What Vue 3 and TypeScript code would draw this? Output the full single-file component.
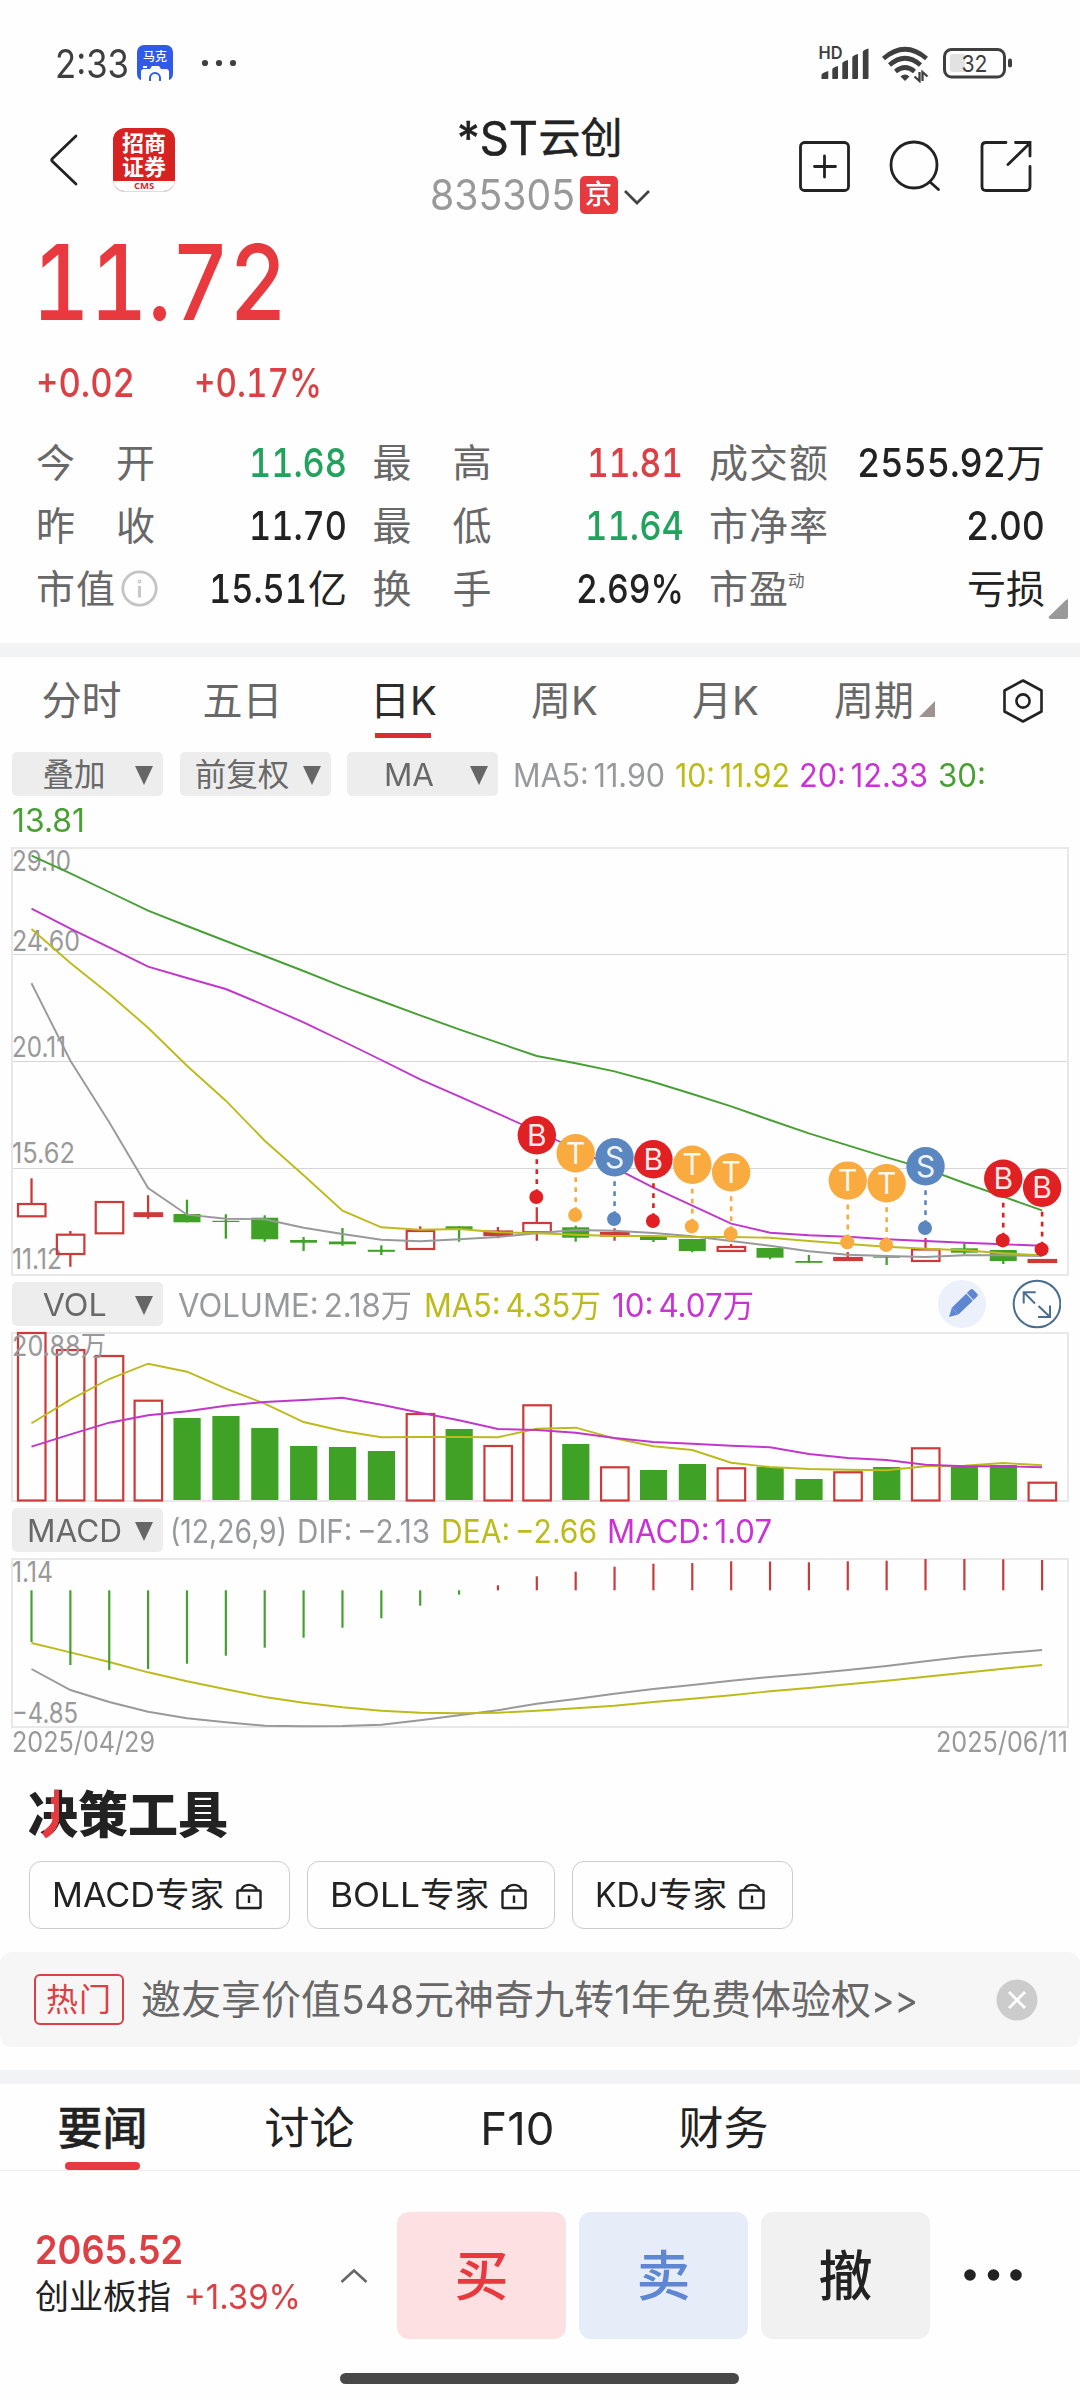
<script setup lang="ts">
interface Stat { label: string; num?: string; unit?: string; w?: number; mr?: number; tone: string; info?: boolean; sup?: string }
interface Legend { text: string; w: number; gap: number; tone: string }
interface Candle { up: boolean; hi: number; top: number; bot: number; lo: number }
interface Marker { i: number; kind: 'B' | 'S' | 'T'; y: number }

/* Condenses a run of figures so that it takes exactly the given width. */
const vFit = {
  mounted(el: HTMLElement, binding: { value: number }) {
    const natural = el.getBoundingClientRect().width
    el.style.width = binding.value + 'px'
    el.style.transform = 'scaleX(' + binding.value / natural + ')'
  },
}

const columns: Stat[][] = [
  [
    { label: '今开', num: '11.68', w: 98, tone: 'down' },
    { label: '昨收', num: '11.70', w: 98, tone: 'ink' },
    { label: '市值', num: '15.51', unit: '亿', w: 98, mr: 1, tone: 'ink', info: true },
  ],
  [
    { label: '最高', num: '11.81', w: 96, mr: 1, tone: 'up' },
    { label: '最低', num: '11.64', w: 99, tone: 'down' },
    { label: '换手', num: '2.69%', w: 108, tone: 'ink' },
  ],
  [
    { label: '成交额', num: '2555.92', unit: '万', w: 149, tone: 'ink' },
    { label: '市净率', num: '2.00', w: 79, tone: 'ink' },
    { label: '市盈', unit: '亏损', tone: 'ink', sup: '动' },
  ],
]

const periods = ['分时', '五日', '日K', '周K', '月K', '周期']

const maLegend: Legend[] = [
  { text: 'MA5: 11.90', w: 152, gap: 15, tone: 'gray' },
  { text: '10: 11.92', w: 115, gap: 10, tone: 'olive' },
  { text: '20: 12.33', w: 129, gap: 9, tone: 'pink' },
  { text: '30:', w: 48, gap: 10, tone: 'green' },
]
const volLegend: Legend[] = [
  { text: 'VOLUME: 2.18万', w: 234, gap: 15, tone: 'gray' },
  { text: 'MA5: 4.35万', w: 177, gap: 12, tone: 'olive' },
  { text: '10: 4.07万', w: 142, gap: 11, tone: 'pink' },
]
const macdLegend: Legend[] = [
  { text: '(12,26,9)', w: 117, gap: 7, tone: 'gray' },
  { text: 'DIF: −2.13', w: 133, gap: 10, tone: 'gray' },
  { text: 'DEA: −2.66', w: 156, gap: 11, tone: 'olive' },
  { text: 'MACD: 1.07', w: 165, gap: 10, tone: 'pink' },
]

const STEP = 38.87
const cx = (i: number) => 31.5 + i * STEP
const pts = (ys: number[]) => ys.map((y, i) => cx(i).toFixed(1) + ',' + y).join(' ')

const raw: [number, number, number, number, number][] = [
  [1, 1178.3, 1204, 1216.3, 1216.3], [1, 1231, 1234.7, 1254, 1266.7], [1, 1201.7, 1202, 1233.3, 1233.3],
  [1, 1195.3, 1213.3, 1216, 1218.7], [0, 1199.7, 1214, 1222.3, 1222.3], [0, 1214.3, 1220.8, 1222, 1238.7],
  [0, 1215.3, 1217.7, 1239.3, 1241.7], [0, 1237, 1240, 1242.7, 1251], [0, 1228, 1241.5, 1244.3, 1245.7],
  [0, 1245.3, 1249.8, 1251.8, 1255], [1, 1226.3, 1231, 1249, 1249], [0, 1226.3, 1226.3, 1229.3, 1241.7],
  [1, 1227, 1231.5, 1235, 1238.3], [1, 1207.3, 1223, 1232.3, 1240.7], [0, 1225.7, 1227.3, 1237.7, 1241.7],
  [1, 1228.3, 1233, 1235.5, 1240.7], [0, 1236, 1236, 1240, 1242], [0, 1239, 1239, 1251, 1252.3],
  [1, 1244, 1247, 1251, 1252], [0, 1248, 1248, 1257.7, 1259.3], [0, 1255, 1261, 1262.8, 1262.8],
  [1, 1252, 1258, 1260, 1260], [0, 1255.3, 1256.5, 1257.7, 1265], [1, 1238, 1249.5, 1261, 1262],
  [0, 1243.3, 1248.3, 1252.7, 1254], [0, 1250, 1250, 1261, 1264], [1, 1259, 1260, 1262, 1262],
]
const candles: Candle[] = raw.map(([u, hi, top, bot, lo]) => ({ up: u === 1, hi, top, bot, lo }))
/* Bodies this thin are drawn filled. */
const solid = (k: Candle) => k.bot - k.top < 3.6

const ma30 = [855.7, 873.3, 892, 910.7, 926, 941, 956, 971, 986.7, 1001, 1015.3, 1029.3, 1042.7, 1056, 1063.3, 1071.3, 1082, 1094, 1106.3, 1120, 1133.3, 1145.3, 1157.3, 1168.7, 1183, 1196.7, 1210.3]
const ma20 = [908.7, 928.7, 947.3, 966.7, 978, 989, 1005.3, 1022.3, 1041, 1060, 1079.3, 1096.3, 1113.7, 1131, 1149, 1167.7, 1187.7, 1205.7, 1223.7, 1232.7, 1235.3, 1236.7, 1239.3, 1241, 1242.7, 1244.3, 1245.7]
const ma10 = [929, 963, 994, 1027.7, 1065.7, 1100.7, 1140.7, 1175.3, 1210.7, 1227.3, 1229.7, 1229, 1232.3, 1233.3, 1234.7, 1236, 1236, 1237, 1237, 1237.7, 1241, 1244, 1246.7, 1248.7, 1250.3, 1253.3, 1255.3]
const ma5 = [983.3, 1060.7, 1122.3, 1188, 1214.7, 1218.7, 1219.3, 1227.7, 1234, 1239.7, 1241.3, 1239.3, 1237, 1233.3, 1230, 1230.7, 1233, 1236.3, 1241, 1245.7, 1251.3, 1254.7, 1256, 1257, 1255.3, 1255.3, 1256]

const markers: Marker[] = [
  { i: 13, kind: 'B', y: 1135.3 }, { i: 14, kind: 'T', y: 1153.3 }, { i: 15, kind: 'S', y: 1157.3 },
  { i: 16, kind: 'B', y: 1159.3 }, { i: 17, kind: 'T', y: 1164.7 }, { i: 18, kind: 'T', y: 1172.3 },
  { i: 21, kind: 'T', y: 1180.6 }, { i: 22, kind: 'T', y: 1183.3 }, { i: 23, kind: 'S', y: 1166.3 },
  { i: 25, kind: 'B', y: 1178.7 }, { i: 26, kind: 'B', y: 1187.7 },
]
const markerColor = { B: '#e02023', S: '#5b87c1', T: '#f9ab3f' }

const priceLabels = [
  { t: '29.10', w: 59, y: 871 }, { t: '24.60', w: 68, y: 951 }, { t: '20.11', w: 54, y: 1057 },
  { t: '15.62', w: 63, y: 1163 }, { t: '11.12', w: 50, y: 1269 },
]

const volTops = [1333, 1350, 1356, 1400.7, 1418, 1416, 1428, 1446, 1447, 1451, 1414, 1429, 1446, 1405.3, 1444, 1467.3, 1470, 1464, 1468.3, 1467, 1479, 1472.3, 1467, 1448.3, 1466.7, 1465, 1482.7]
const vol5 = [1423.3, 1399.7, 1379, 1363.7, 1371.7, 1388.7, 1403.7, 1422, 1431, 1437.3, 1437, 1437, 1437.3, 1428.7, 1427.7, 1438.3, 1446.3, 1450, 1462.7, 1467, 1469, 1469.7, 1470.3, 1466.3, 1465.7, 1463, 1465.3]
const vol10 = [1446.7, 1434.3, 1422.7, 1415.3, 1411.3, 1405.7, 1402, 1400, 1397.7, 1404.7, 1412.7, 1420.3, 1429, 1430, 1432.7, 1438, 1442, 1443.7, 1445.7, 1447.3, 1454, 1458, 1460, 1464.7, 1466.3, 1466.3, 1467.3]

const ZERO = 1590.3
const macd = [1642, 1665, 1670, 1669, 1663.7, 1655.7, 1647.7, 1637.7, 1627.7, 1618.3, 1605.7, 1594.7, 1585.3, 1576.3, 1571.7, 1566.7, 1563.7, 1563, 1561.3, 1561.5, 1562.3, 1561.3, 1560.7, 1559, 1559, 1559.3, 1560]
const dif = [1669, 1690, 1702, 1711.7, 1718.3, 1722.3, 1725.7, 1726.3, 1726, 1724.7, 1720.3, 1715.3, 1710.3, 1703.7, 1699, 1693.7, 1689, 1685, 1680.7, 1677, 1673.7, 1670, 1666, 1661.3, 1656.7, 1653.3, 1650]
const dea = [1643, 1652.3, 1662, 1672.3, 1681.3, 1689.3, 1697, 1702.7, 1707.3, 1710.7, 1712.7, 1713.3, 1712.7, 1710.7, 1708.3, 1705.7, 1702, 1698.7, 1695.3, 1691.3, 1688, 1684.3, 1680.7, 1676.7, 1672.7, 1668.7, 1665]

const tools = [{ name: 'MACD', w: 103 }, { name: 'BOLL', w: 90 }, { name: 'KDJ', w: 63 }]
const newsTabs = ['要闻', '讨论', 'F10', '财务']
</script>

<template>
  <div class="screen">
    <div class="status">
      <span class="clock"><span v-fit="74" class="fit">2:33</span></span>
      <svg class="camera" width="36" height="36" viewBox="0 0 36 36">
        <rect width="36" height="36" rx="7" fill="#2f5be8" />
        <path d="M4 36V27q0-3 3-3h6l2-3h7l2 3h5q3 0 3 3v9z" fill="#fff" />
        <path d="M6 22h4" stroke="#fff" stroke-width="2" />
        <path d="M13 36v-3a5 5 0 0 1 10 0v3" fill="none" stroke="#2f5be8" stroke-width="2" />
        <text x="18" y="16" text-anchor="middle" class="camera-text">马克</text>
      </svg>
      <svg class="more" width="40" height="8" viewBox="0 0 40 8" fill="#3f3f3f">
        <circle cx="6" cy="4" r="3.1" /><circle cx="20" cy="4" r="3.1" /><circle cx="34" cy="4" r="3.1" />
      </svg>
      <svg class="signals" width="196" height="40" viewBox="818 43 196 40">
        <text x="818.5" y="59.3" class="hd" textLength="24" lengthAdjust="spacingAndGlyphs">HD</text>
        <g fill="#3f3f3f">
          <path d="M821.5 79v-4q0-2 6.800-4v7q0 1-1 1z" />
          <path d="M832.300 79v-9.500q0-2 5.700-3.500v12q0 1-1 1z" />
          <path d="M842.300 79v-15.500q0-2 5.700-3.500v18q0 1-1 1z" />
          <path d="M852.300 79v-21.500q0-2 5.700-3.500v24q0 1-1 1z" />
          <path d="M862.800 79v-27q0-2 5.700-3.500v29.500q0 1-1 1z" />
          <path d="M905 81l-4.500-4.500q4.500-4 9 0z" />
        </g>
        <g fill="none" stroke="#3f3f3f" stroke-width="4.600">
          <path d="M883.500 58.500q21.500-18.500 43 0" />
          <path d="M889.500 65q15.500-13.500 31 0" />
          <path d="M895.500 71.500q9.500-8 19 0" />
        </g>
        <path d="M919.500 72v9l-5-4.500M922.500 81v-9l5 4.500" fill="none" stroke="#3f3f3f" stroke-width="2.300" />
        <rect x="944.500" y="49.500" width="60" height="27.500" rx="7" fill="none" stroke="#3f3f3f" stroke-width="3" />
        <path d="M953 54h12v18h-12q-3 0-3-3V57q0-3 3-3z" fill="#e2e2e2" />
        <rect x="1008" y="58.500" width="4" height="9" rx="2" fill="#3f3f3f" />
        <text x="961.500" y="71.700" class="batt" textLength="26" lengthAdjust="spacingAndGlyphs">32</text>
      </svg>
    </div>

    <header class="header">
      <div class="head-left">
        <svg width="30" height="54" viewBox="0 0 30 54" fill="none" stroke="#222" stroke-width="2.800" stroke-linejoin="round" stroke-linecap="round">
          <path d="M27 3L3.500 25.500q-1.500 1.500 0 3L27 51" />
        </svg>
        <div class="broker">
          <div class="broker-name">招商<br />证券</div>
          <div class="broker-sub">CMS</div>
        </div>
      </div>
      <div class="head-mid">
        <div class="title"><span v-fit="81" class="fit">*ST</span><span class="title-cn">云创</span></div>
        <div class="code">
          <span v-fit="145" class="fit">835305</span>
          <span class="market">京</span>
          <svg width="28" height="18" viewBox="0 0 28 18" fill="none" stroke="#444" stroke-width="2.800"><path d="M2 3l12 12L26 3" /></svg>
        </div>
      </div>
      <div class="head-right">
        <svg width="52" height="54" viewBox="797 139 52 54" fill="none" stroke="#222" stroke-width="2.800" stroke-linecap="round">
          <rect x="799.500" y="142.500" width="48" height="48" rx="4" /><path d="M823.500 156v21M813.500 166.500h21" />
        </svg>
        <svg width="52" height="54" viewBox="888 139 52 54" fill="none" stroke="#222" stroke-width="2.800" stroke-linecap="round">
          <circle cx="913" cy="165" r="23" /><path d="M929 182l8.500 7.500" />
        </svg>
        <svg width="52" height="54" viewBox="980 139 52 54" fill="none" stroke="#222" stroke-width="2.800" stroke-linecap="round">
          <path d="M1006 142.500h-20q-4 0-4 4v40q0 4 4 4h40q4 0 4-4V166.500" /><path d="M1015.500 142.500h14.500v13.500M1029 144l-21 20.500" />
        </svg>
      </div>
    </header>

    <section class="quote">
      <div class="price"><span v-fit="255" class="fit">11.72</span></div>
      <div class="change">
        <span v-fit="99" class="fit">+0.02</span>
        <span v-fit="128" class="fit second">+0.17%</span>
      </div>
      <div class="stats">
        <div v-for="(col, c) in columns" :key="c" class="stat-col">
          <div v-for="s in col" :key="s.label" class="stat">
            <div class="stat-label" :class="{ packed: s.info || s.sup }">
              <span v-for="ch in s.label" :key="ch">{{ ch }}</span>
              <svg v-if="s.info" class="info" width="37" height="37" viewBox="0 0 37 37" fill="none" stroke="#c4c4c4" stroke-width="2.800">
                <circle cx="18.500" cy="18.500" r="16.700" /><path d="M18.500 16v11.500" /><circle cx="18.500" cy="11.500" r=".6" />
              </svg>
              <span v-if="s.sup" class="sup">{{ s.sup }}</span>
            </div>
            <div class="stat-value" :class="s.tone">
              <span v-if="s.num" v-fit="s.w" class="fit" :style="{ marginRight: (s.mr || 0) + 'px' }">{{ s.num }}</span><span v-if="s.unit" class="unit">{{ s.unit }}</span>
            </div>
          </div>
        </div>
        <svg class="corner" width="20" height="20" viewBox="0 0 20 20"><path d="M20 0v18q0 2-2 2H2q-2-1-1-2.500L18 1z" fill="#999" /></svg>
      </div>
    </section>

    <div class="band"></div>

    <nav class="periods">
      <div v-for="(p, i) in periods" :key="p" class="period" :class="{ active: i === 2 }">
        <span>{{ p }}</span>
        <svg v-if="i === 5" class="tri" width="16" height="16" viewBox="0 0 16 16"><path d="M16 0v16H0z" fill="#9f9391" /></svg>
      </div>
      <svg class="gear" width="42" height="46" viewBox="0 0 42 46" fill="none" stroke="#222" stroke-width="2.600" stroke-linejoin="round">
        <path d="M21 2.500L39.500 12.500V33.500L21 43.500L2.500 33.500V12.500z" /><circle cx="21" cy="23" r="6.600" />
      </svg>
    </nav>

    <div class="bar">
      <div class="drop"><span class="drop-text">叠加</span><i></i></div>
      <div class="drop"><span class="drop-text">前复权</span><i></i></div>
      <div class="drop"><span class="drop-text"><span v-fit="50" class="fit">MA</span></span><i></i></div>
      <span v-for="l in maLegend" :key="l.text" v-fit="l.w" class="fit legend" :class="l.tone" :style="{ marginLeft: l.gap + 'px' }">{{ l.text }}</span>
    </div>
    <div class="bar-second green"><span v-fit="73" class="fit">13.81</span></div>

    <svg class="chart" width="1080" height="438" viewBox="0 844 1080 438">
      <g stroke="#d6d6d6"><path d="M12 954.500H1068M12 1061.500H1068M12 1168.500H1068" /></g>
      <rect x="12" y="848" width="1056" height="427" fill="none" stroke="#e8e8e8" stroke-width="2" />
      <text v-for="l in priceLabels" :key="l.t" x="12" :y="l.y" :textLength="l.w" lengthAdjust="spacingAndGlyphs" class="axis">{{ l.t }}</text>
      <g v-for="(k, i) in candles" :key="i">
        <template v-if="k.up">
          <path :d="`M${cx(i)} ${k.hi}V${k.top}M${cx(i)} ${k.bot}V${k.lo}`" stroke="#cc3a3a" stroke-width="2.300" />
          <rect :x="cx(i) - 13.5" :y="k.top" width="27.500" :height="k.bot - k.top" :fill="solid(k) ? '#cc3a3a' : 'none'" stroke="#cc3a3a" stroke-width="2.200" />
        </template>
        <template v-else>
          <path :d="`M${cx(i)} ${k.hi}V${k.lo}`" stroke="#3fa226" stroke-width="2.300" />
          <rect :x="cx(i) - 13.5" :y="k.top" width="27" :height="k.bot - k.top" fill="#3fa226" />
        </template>
      </g>
      <g fill="none" stroke-width="1.900">
        <polyline :points="pts(ma5)" stroke="#98999b" />
        <polyline :points="pts(ma10)" stroke="#bdbb1c" />
        <polyline :points="pts(ma20)" stroke="#c137cb" />
        <polyline :points="pts(ma30)" stroke="#489f35" />
      </g>
      <g v-for="m in markers" :key="m.i">
        <path :d="`M${cx(m.i)} ${m.y + 24}V${m.y + 56}`" :stroke="markerColor[m.kind]" stroke-width="2.600" stroke-dasharray="4.800 5.200" />
        <circle :cx="cx(m.i)" :cy="m.y" r="19.200" :fill="markerColor[m.kind]" />
        <circle :cx="cx(m.i) - 0.5" :cy="m.y + 61.7" r="7" :fill="markerColor[m.kind]" />
        <text :x="cx(m.i)" :y="m.y + 10.5" text-anchor="middle" class="mark">{{ m.kind }}</text>
      </g>
    </svg>

    <div class="bar">
      <div class="drop"><span class="drop-text"><span v-fit="64" class="fit">VOL</span></span><i></i></div>
      <span v-for="l in volLegend" :key="l.text" v-fit="l.w" class="fit legend" :class="l.tone" :style="{ marginLeft: l.gap + 'px' }">{{ l.text }}</span>
      <svg class="bar-icons" width="124" height="50" viewBox="937 1279 124 50">
        <circle cx="962" cy="1304" r="24" fill="#ebf0fa" />
        <g transform="translate(949 1317) rotate(-44)" fill="#5f86d3">
          <path d="M0 0l8.500-4.600v9.200z" /><path d="M8.500 -4.800h20v9.600h-20z" /><path d="M29.500 -4.800h5q2 0 2 2v5.600q0 2-2 2h-5z" />
        </g>
        <g fill="none" stroke="#4a6e90" stroke-width="2">
          <circle cx="1037" cy="1304" r="23.300" />
          <path d="M1035 1303.500l-11-11M1023.700 1303.500v-11.200h12M1038.500 1306l11 10.500M1050 1305.500v11.500h-12" />
        </g>
      </svg>
    </div>

    <svg class="chart" width="1080" height="182" viewBox="0 1326 1080 182">
      <rect x="12" y="1333" width="1056" height="168" fill="none" stroke="#e8e8e8" stroke-width="2" />
      <template v-for="(y, i) in volTops" :key="i">
        <rect v-if="candles[i].up" :x="cx(i) - 13.5" :y="y" width="27.500" :height="1500.5 - y" fill="none" stroke="#cc3a3a" stroke-width="2.200" />
        <rect v-else :x="cx(i) - 13.5" :y="y" width="27.200" :height="1500 - y" fill="#3fa226" />
      </template>
      <text x="12" y="1356" textLength="94" lengthAdjust="spacingAndGlyphs" class="axis">20.88万</text>
      <g fill="none" stroke-width="1.900">
        <polyline :points="pts(vol5)" stroke="#bdbb1c" />
        <polyline :points="pts(vol10)" stroke="#c137cb" />
      </g>
    </svg>

    <div class="bar">
      <div class="drop"><span class="drop-text"><span v-fit="95" class="fit">MACD</span></span><i></i></div>
      <span v-for="l in macdLegend" :key="l.text" v-fit="l.w" class="fit legend" :class="l.tone" :style="{ marginLeft: l.gap + 'px' }">{{ l.text }}</span>
    </div>

    <svg class="chart" width="1080" height="178" viewBox="0 1552 1080 178">
      <rect x="12" y="1559" width="1056" height="168" fill="none" stroke="#e8e8e8" stroke-width="2" />
      <text x="12" y="1582" textLength="41" lengthAdjust="spacingAndGlyphs" class="axis">1.14</text>
      <text x="12" y="1723.400" textLength="66" lengthAdjust="spacingAndGlyphs" class="axis">−4.85</text>
      <g fill="none" stroke-width="1.900">
        <polyline :points="pts(dif)" stroke="#98999b" />
        <polyline :points="pts(dea)" stroke="#bdbb1c" />
      </g>
      <path v-for="(y, i) in macd" :key="i" :d="`M${cx(i)} ${ZERO}V${y}`" :stroke="y > ZERO ? '#45a030' : '#c43c3c'" stroke-width="2.200" />
    </svg>
    <div class="dates"><span v-fit="143" class="fit">2025/04/29</span><span v-fit="132" class="fit">2025/06/11</span></div>

    <section class="tools">
      <h2><span class="accent">决</span>策工具</h2>
      <div class="chips">
        <div v-for="t in tools" :key="t.name" class="chip">
          <span v-fit="t.w" class="fit">{{ t.name }}</span><span>专家</span>
          <svg width="26" height="30" viewBox="0 0 26 30" fill="none" stroke="#222" stroke-width="2.400">
            <rect x="1.500" y="10.500" width="23" height="17.500" rx="1.500" /><path d="M5 10.500a8.500 8.500 0 0 1 16 0M13 15.500v7.500" />
          </svg>
        </div>
      </div>
    </section>

    <div class="promo">
      <span class="hot">热门</span>
      <span class="promo-text">邀友享价值<span v-fit="73" class="fit">548</span>元神奇九转<span v-fit="17" class="fit">1</span>年免费体验权<span v-fit="47" class="fit">&gt;&gt;</span></span>
      <svg class="close" width="42" height="42" viewBox="0 0 42 42"><circle cx="21" cy="21" r="20.500" fill="#ccc" /><path d="M13 13l16 16M29 13L13 29" stroke="#fff" stroke-width="2.800" /></svg>
    </div>

    <div class="band low"></div>

    <nav class="news">
      <div v-for="(n, i) in newsTabs" :key="n" class="news-tab" :class="{ active: i === 0 }">
        <span v-if="n === 'F10'" v-fit="74" class="fit">F10</span><span v-else>{{ n }}</span>
      </div>
    </nav>

    <footer class="trade">
      <div class="index">
        <div class="index-num"><span v-fit="148" class="fit">2065.52</span></div>
        <div class="index-row"><span>创业板指</span><span v-fit="117" class="fit up">+1.39%</span></div>
      </div>
      <svg class="expand" width="28" height="16" viewBox="0 0 28 16" fill="none" stroke="#666" stroke-width="2.600"><path d="M1.500 14L14 2.500L26.500 14" /></svg>
      <div class="btn buy">买</div>
      <div class="btn sell">卖</div>
      <div class="btn cancel">撤</div>
      <svg class="dots" width="60" height="14" viewBox="0 0 60 14" fill="#222"><circle cx="7" cy="7" r="5.800" /><circle cx="30.500" cy="7" r="5.800" /><circle cx="53" cy="7" r="5.800" /></svg>
    </footer>
    <div class="home"></div>
  </div>
</template>

<style>
body { background: #fefefe; }
</style>

<style scoped>
.screen {
  width: 1080px;
  height: 2400px;
  overflow: hidden;
  background: #fefefe;
  color: #222;
  font-family: Inter, "Noto Sans CJK SC", sans-serif;
  display: flex;
  flex-direction: column;
}
.screen > * { flex: none; }
svg { display: block; flex: none; }
.fit { display: inline-block; white-space: nowrap; transform-origin: left center; flex: none; }

.status { height: 100px; box-sizing: border-box; padding: 26px 66px 0 55px; display: flex; align-items: center; color: #3f3f3f; }
.clock { font-size: 39px; line-height: 40px; padding-top: 1px; }
.camera { margin-left: 8px; }
.camera-text { font-size: 12px; fill: #fff; font-weight: 500; }
.more { margin-left: 26px; }
.signals { margin-left: auto; }
.hd { font-size: 17px; font-weight: 600; fill: #3f3f3f; }
.batt { font-size: 23.5px; fill: #3f3f3f; }

.header { height: 116px; display: grid; grid-template-columns: 1fr auto 1fr; }
.head-left { display: flex; padding: 28px 0 0 49px; }
.head-left > svg { margin-top: 5px; }
.broker { width: 62px; height: 64px; box-sizing: border-box; margin-left: 34px; border-radius: 12px; overflow: hidden; background: #d82222; border-bottom: 1px solid #ddd; }
.broker-name { height: 53px; box-sizing: border-box; padding-top: 3px; color: #fff; font-size: 22px; line-height: 24px; font-weight: 700; text-align: center; }
.broker-sub { height: 10px; line-height: 10px; background: #fff; color: #cc3030; font-family: "Open Sans", sans-serif; font-size: 9.5px; font-weight: 700; text-align: center; }
.head-mid { padding-top: 13px; display: flex; flex-direction: column; align-items: center; gap: 12px; }
.title { height: 50px; line-height: 50px; font-size: 46px; display: flex; }
.title .fit { -webkit-text-stroke: .5px #222; }
.title-cn { font-size: 42px; -webkit-text-stroke: .5px #222; }
.code { height: 39px; display: flex; align-items: center; font-size: 42px; line-height: 40px; color: #999; }
.market { width: 38px; height: 38px; margin-left: 5px; border-radius: 5px; background: #e8393f; color: #fff; font-size: 27px; line-height: 38px; text-align: center; font-weight: 500; }
.code svg { margin: 4px 0 0 5px; }
.head-right { display: flex; justify-content: flex-end; gap: 39px; padding: 39px 48px 0 0; }

.quote { height: 427px; font-variant-numeric: tabular-nums; }
.price { height: 131px; line-height: 131px; font-size: 105px; font-weight: 500; color: #e8393f; padding-left: 32px; }
.change { height: 71px; line-height: 71px; font-size: 39px; font-weight: 500; color: #dc4044; padding-left: 36px; display: flex; }
.change .second { margin-left: 59px; }
.stats { position: relative; margin: 13px 35px 0 36px; display: flex; justify-content: space-between; font-size: 40px; }
.stat-col { width: 311px; }
.stat-col:nth-child(3) { width: 336px; }
.stat { height: 63px; line-height: 63px; display: flex; justify-content: space-between; }
.stat-label { width: 119px; font-size: 39px; display: flex; justify-content: space-between; color: #686868; }
.stat-label.packed { justify-content: flex-start; align-items: center; gap: 1px; }
.info { margin: 0 0 0 5px; }
.sup { font-size: 16.5px; margin: -14px 0 0 -1px; }
.stat-value { display: flex; font-weight: 500; }
.unit { font-weight: 400; font-size: 39px; }
.down { color: #21a35d; }
.up { color: #dc4044; }
.ink { color: #222; }
.corner { position: absolute; right: -23px; bottom: 1px; }

.band { height: 14px; background: #f1f3f5; }
.periods { height: 95px; padding-left: 1px; display: flex; }
.period { position: relative; width: 161px; height: 87px; line-height: 87px; text-align: center; font-size: 40px; color: #686868; }
.period.active { color: #2c2c2c; }
.period.active::after { content: ""; position: absolute; left: 52px; top: 76px; width: 56px; height: 5px; background: #dc2c2c; }
.tri { position: absolute; left: 113px; top: 44px; }
.period:nth-child(6) { text-align: left; text-indent: 28px; }
.gear { margin: 21px 0 0 35px; }

.bar { height: 44px; display: flex; align-items: center; padding-left: 12px; font-size: 32px; line-height: 44px; position: relative; }
.legend { position: relative; top: 1.5px; word-spacing: -4px; }
.drop { width: 151px; height: 44px; margin-right: 17px; background: #ededed; border-radius: 5px; display: flex; color: #686868; }
.drop + .drop { margin-right: 16px; }
.drop:last-of-type { margin-right: 0; }
.drop-text { width: 124px; text-align: center; line-height: 46px; font-size: 31.5px; }
.drop i { width: 0; height: 0; margin: 14px 0 0 0; border: 9.500px solid transparent; border-bottom: 0; border-top: 19px solid #666; transform: translateX(-1px); }
.bar-icons { position: absolute; left: 937px; top: -3px; }
.bar-second { height: 48px; line-height: 50px; font-size: 32px; padding-left: 12px; }
.gray { color: #98999c; }
.olive { color: #bcbb18; }
.pink { color: #c932d3; }
.green { color: #48a032; }
.axis { font-size: 28px; fill: #999; }
.mark { font-size: 30px; fill: #fff; fill-opacity: .92; font-weight: 400; }
.dates { height: 24px; padding: 0 12px; display: flex; justify-content: space-between; font-size: 28px; line-height: 25px; color: #999; }

.tools { height: 198px; padding-left: 29px; }
.tools h2 { margin: 0 0 0 -1px; padding-top: 36px; height: 71px; font-size: 50px; line-height: 50px; font-weight: 900; }
.accent { color: transparent; -webkit-background-clip: text; background-clip: text; background-color: #222; background-image: linear-gradient(#e8393f, #e8393f), linear-gradient(122deg, transparent 30%, #e8393f 30%, #e8393f 61%, transparent 61%); background-repeat: no-repeat; background-size: 8px 62%, 18px 38%; background-position: 23px 0, 12px 100%; }
.chips { display: flex; gap: 17px; }
.chip { height: 68px; box-sizing: border-box; border: 1px solid #ccc; border-radius: 12px; padding: 0 27px 0 22px; display: flex; align-items: center; font-size: 34.5px; line-height: 66px; }
.chip svg { margin: 0 0 1px 12px; }

.promo { height: 95px; border-radius: 12px; background: #f6f6f6; display: flex; align-items: center; padding: 0 42px 0 34px; }
.hot { width: 90px; height: 51px; box-sizing: border-box; border: 2px solid #dc4044; border-radius: 6px; color: #dc4044; font-size: 32px; line-height: 48px; text-align: center; letter-spacing: 1px; }
.promo-text { margin-left: 17px; font-size: 40px; color: #686868; display: flex; line-height: 96px; }
.close { margin-left: auto; }
.low { margin-top: 23px; }

.news { height: 87px; box-sizing: border-box; border-bottom: 1px solid #ececec; display: flex; margin-left: -1px; }
.news-tab { position: relative; width: 207px; height: 86px; line-height: 89px; text-align: center; font-size: 45px; }
.news-tab.active { font-weight: 500; -webkit-text-stroke: .4px #222; }
.news-tab.active::after { content: ""; position: absolute; left: 66px; bottom: 0; width: 75px; height: 8px; border-radius: 4px; background: #e8393f; }

.trade { height: 202px; display: flex; align-items: flex-start; padding-top: 41px; box-sizing: border-box; }
.index { width: 264px; margin-left: 35px; padding-top: 13px; }
.index-num { height: 50px; line-height: 50px; font-size: 40px; font-weight: 600; color: #dc4044; }
.index-row { height: 44px; line-height: 44px; font-size: 34px; display: flex; gap: 13px; white-space: nowrap; }
.index-row > span:first-child { flex: none; }
.expand { margin: 56px 29px 0 41px; }
.btn { width: 169px; height: 127px; margin-right: 13px; border-radius: 12px; text-align: center; font-size: 54px; line-height: 129px; font-weight: 500; }
.buy { background: #fde0e2; color: #e8393f; }
.sell { background: #e6edf9; color: #5f86d3; }
.cancel { background: #f1f1f1; }
.dots { margin: 56px 0 0 20px; }
.home { width: 399px; height: 11px; margin-left: 340px; border-radius: 6px; background: #484848; }
</style>
